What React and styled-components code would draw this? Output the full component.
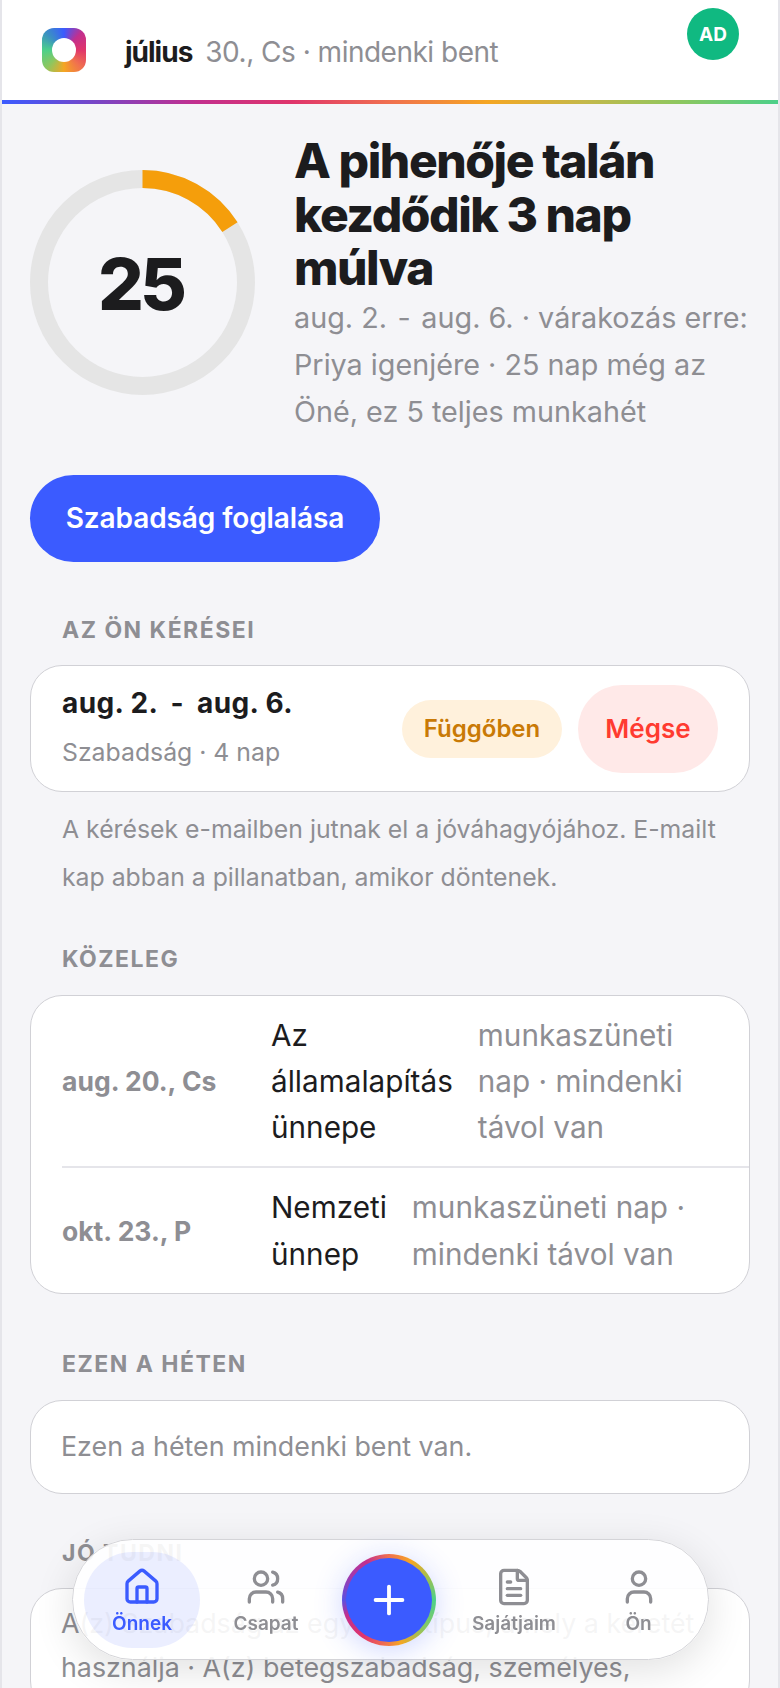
import React from 'react';
import styled, { createGlobalStyle } from 'styled-components';
import { Home, Users, FileText, User, Plus } from 'lucide-react';

const rainbow = '#3b5bff, #7a45c4, #c22f8e, #e0356b, #f0704f, #f5a623, #c4b84a, #8cc760, #4cd08a';

const Global = createGlobalStyle`
    html, body {
        margin: 0;
        padding: 0;
        height: 1688px;
        overflow: hidden;
        background: #f5f5f8;
    }
    * { box-sizing: border-box; }
    body {
        font-family: Inter, "Noto Sans", sans-serif;
        color: #1c1c1e;
    }
`

const Page = styled.div`
    height: 1688px;
    overflow: hidden;
    border-left: 2px solid #e5e5ea;
    border-right: 2px solid #e5e5ea;
    background: #f5f5f8;
`

const Header = styled.header`
    position: relative;
    display: flex;
    align-items: center;
    height: 104px;
    padding: 0 40px 4px 40px;
    background: #fff;
    &::after {
        content: '';
        position: absolute;
        left: 0;
        right: 0;
        bottom: 0;
        height: 4px;
        background: linear-gradient(90deg, ${rainbow});
    }
`

const Logo = styled.div`
    display: flex;
    align-items: center;
    justify-content: center;
    width: 44px;
    height: 44px;
    border-radius: 12px;
    background: conic-gradient(from 0deg, #3b5bff, #c22f8e, #e0356b, #f0704f, #f5a623, #8cc760, #4cd08a, #3b8fc4, #3b5bff);
    &::after {
        content: '';
        width: 24px;
        height: 24px;
        border-radius: 50%;
        background: #fff;
    }
`

const HeaderText = styled.div`
    margin-left: 39px;
    padding-top: 4px;
    font-size: 28px;
    letter-spacing: -0.5px;
    color: #8e8e93;
`

const Month = styled.span`
    font-weight: 700;
    letter-spacing: -1px;
    color: #1c1c1e;
    margin-right: 13px;
`

const Avatar = styled.div`
    position: absolute;
    right: 39px;
    top: 8px;
    width: 52px;
    height: 52px;
    border-radius: 50%;
    display: flex;
    align-items: center;
    justify-content: center;
    background: #10b981;
    color: #fff;
    font-size: 19px;
    font-weight: 700;
`

const Hero = styled.section`
    display: flex;
    gap: 39px;
    padding: 30px 28px 0 28px;
`

const RingBox = styled.div`
    position: relative;
    flex: none;
    width: 225px;
    height: 225px;
    margin-top: 36px;
`

const RingValue = styled.div`
    position: absolute;
    inset: 0;
    display: flex;
    align-items: center;
    justify-content: center;
    padding: 2px 4px 0 0;
    font-size: 72px;
    font-weight: 800;
    letter-spacing: -4px;
`

const HeroText = styled.div`
    flex: 1;
    min-width: 0;
`

const Title = styled.h1`
    margin: 0;
    font-size: 48px;
    line-height: 53.5px;
    font-weight: 800;
    letter-spacing: -1.45px;
`

const Subtitle = styled.p`
    margin: -1px 0 0;
    font-size: 28.75px;
    line-height: 47.4px;
    color: #8e8e93;
`

// the date ranges have a wider gap around the hyphen
const Dash = styled.span`
    margin: 0 ${props => props.gap}px;
`

const BookButton = styled.button`
    display: block;
    margin: 39px 0 0 28px;
    width: 350px;
    height: 87px;
    border: 0;
    border-radius: 44px;
    background: #3b5bff;
    color: #fff;
    font-family: inherit;
    font-size: 28px;
    font-weight: 600;
    letter-spacing: -0.1px;
`

const Label = styled.h2`
    margin: ${props => props.top}px 0 0 60px;
    font-size: 23px;
    line-height: 28px;
    font-weight: 700;
    letter-spacing: 1.5px;
    color: #8e8e93;
`

const Card = styled.div`
    margin: 21.5px 28px 0;
    background: #fff;
    border: 1px solid #d1d1d6;
    border-radius: 32px;
`

const RequestCard = styled(Card)`
    display: flex;
    align-items: center;
    height: 127px;
    padding: 0 31px;
`

const RequestInfo = styled.div`
    flex: 1;
    padding-bottom: 5px;
`

const RequestTitle = styled.div`
    font-size: 28px;
    line-height: 36px;
    font-weight: 700;
    letter-spacing: 0.4px;
`

const RequestMeta = styled.div`
    margin-top: 16px;
    font-size: 24.8px;
    line-height: 30px;
    color: #8e8e93;
`

const Pill = styled.div`
    display: flex;
    align-items: center;
    justify-content: center;
    width: 160px;
    height: 58px;
    border-radius: 29px;
    background: #fff1dc;
    color: #c97a06;
    font-size: 24px;
    font-weight: 600;
`

const CancelButton = styled.button`
    width: 140px;
    height: 88px;
    margin-left: 16px;
    border: 0;
    border-radius: 44px;
    background: #ffe9e8;
    color: #ff3b30;
    font-family: inherit;
    font-size: 26px;
    font-weight: 600;
`

const Note = styled.p`
    margin: 14px 60px 0;
    font-size: 24.8px;
    line-height: 47.4px;
    color: #8e8e93;
`

const Row = styled.div`
    display: flex;
    align-items: center;
    gap: 25px;
    margin-left: 31px;
    padding: 16px 0;
    font-size: 29.7px;
    line-height: 46.3px;
    & + & {
        border-top: 2px solid #e5e5ea;
    }
`

const RowDate = styled.div`
    flex: none;
    width: 184px;
    font-size: 26.5px;
    font-weight: 700;
    color: #8e8e93;
`

const RowName = styled.div`
    flex: none;
`

const RowDesc = styled.div`
    color: #8e8e93;
`

const PlainText = styled.p`
    margin: 0;
    padding: 22.5px 30px;
    font-size: 26.8px;
    line-height: 47px;
    color: #8e8e93;
`

const TipText = styled(PlainText)`
    padding-top: 12px;
    line-height: 44px;
`

const Nav = styled.nav`
    position: fixed;
    left: 72px;
    top: 1539px;
    width: 637px;
    height: 121px;
    display: flex;
    align-items: center;
    padding: 0 11px;
    border: 1px solid #d4d4d8;
    border-radius: 61px;
    background: rgba(255, 255, 255, 0.91);
    box-shadow: 0 10px 40px rgba(0, 0, 0, 0.12);
`

const Tab = styled.div`
    display: flex;
    flex-direction: column;
    align-items: center;
    justify-content: center;
    gap: 6px;
    flex: none;
    width: ${props => props.width}px;
    height: 96px;
    padding-top: 2px;
    border-radius: 48px;
    background: ${props => props.active ? 'rgba(59, 91, 255, 0.1)' : 'transparent'};
    color: ${props => props.active ? '#3b5bff' : '#8e8e93'};
    font-size: 19px;
    line-height: 22px;
    font-weight: 600;
`

const Fab = styled.div`
    flex: none;
    display: flex;
    align-items: center;
    justify-content: center;
    width: 94px;
    height: 92px;
    margin: 0 10px;
    border-radius: 50%;
    background: conic-gradient(#f0704f, #f5a623 30deg, #a0c050 60deg, #4cd08a 90deg, #8cc760 130deg, #f5a623 165deg, #f0704f 185deg, #e0356b 215deg, #c22f8e 250deg, #5a50e0 270deg, #a03ab0 300deg, #c22f8e 330deg, #f0704f);
    box-shadow: 0 4px 28px rgba(59, 91, 255, 0.25);
`

const FabInner = styled.div`
    display: flex;
    align-items: center;
    justify-content: center;
    width: 86px;
    height: 84px;
    border-radius: 50%;
    background: #3b5bff;
    color: #fff;
`

const Ring = () => {
    const r = 103.5;
    const c = 2 * Math.PI * r;
    return (
        <svg width="225" height="225" viewBox="0 0 225 225">
            <circle cx="112.5" cy="112.5" r={r} fill="none" stroke="#e5e5e5" strokeWidth="18" />
            <circle
                cx="112.5"
                cy="112.5"
                r={r}
                fill="none"
                stroke="#f59e0b"
                strokeWidth="18"
                strokeDasharray={`${c * 0.16} ${c}`}
                transform="rotate(-90 112.5 112.5)"
            />
        </svg>
    );
};

export default function App() {
    return (
        <Page>
            <Global />
            <Header>
                <Logo />
                <HeaderText><Month>július</Month>30., Cs · mindenki bent</HeaderText>
                <Avatar>AD</Avatar>
            </Header>
            <Hero>
                <RingBox>
                    <Ring />
                    <RingValue>25</RingValue>
                </RingBox>
                <HeroText>
                    <Title>A pihenője talán kezdődik 3 nap múlva</Title>
                    <Subtitle>aug. 2. <Dash gap={2.5}>-</Dash> aug. 6. · várakozás erre: Priya igenjére · 25 nap még az Öné, ez 5 teljes munkahét</Subtitle>
                </HeroText>
            </Hero>
            <BookButton>Szabadság foglalása</BookButton>

            <Label top={54}>AZ ÖN KÉRÉSEI</Label>
            <RequestCard>
                <RequestInfo>
                    <RequestTitle>aug. 2. <Dash gap={6}>-</Dash> aug. 6.</RequestTitle>
                    <RequestMeta>Szabadság · 4 nap</RequestMeta>
                </RequestInfo>
                <Pill>Függőben</Pill>
                <CancelButton>Mégse</CancelButton>
            </RequestCard>
            <Note>A kérések e-mailben jutnak el a jóváhagyójához. E-mailt kap abban a pillanatban, amikor döntenek.</Note>

            <Label top={44}>KÖZELEG</Label>
            <Card>
                <Row>
                    <RowDate>aug. 20., Cs</RowDate>
                    <RowName>Az<br />államalapítás<br />ünnepe</RowName>
                    <RowDesc>munkaszüneti<br />nap · mindenki<br />távol van</RowDesc>
                </Row>
                <Row>
                    <RowDate>okt. 23., P</RowDate>
                    <RowName>Nemzeti<br />ünnep</RowName>
                    <RowDesc>munkaszüneti nap ·<br />mindenki távol van</RowDesc>
                </Row>
            </Card>

            <Label top={56}>EZEN A HÉTEN</Label>
            <Card>
                <PlainText>Ezen a héten mindenki bent van.</PlainText>
            </Card>

            <Label top={45}>JÓ TUDNI</Label>
            <Card>
                <TipText>A(z) Szabadság az egyetlen típus, amely a keretét<br />használja · A(z) betegszabadság, személyes,</TipText>
            </Card>

            <Nav>
                <Tab width={116} active><Home size={40} strokeWidth={2} />Önnek</Tab>
                <Tab width={132}><Users size={40} strokeWidth={2} />Csapat</Tab>
                <Fab><FabInner><Plus size={46} strokeWidth={2} /></FabInner></Fab>
                <Tab width={136}><FileText size={40} strokeWidth={2} />Sajátjaim</Tab>
                <Tab width={113}><User size={40} strokeWidth={2} />Ön</Tab>
            </Nav>
        </Page>
    );
}
